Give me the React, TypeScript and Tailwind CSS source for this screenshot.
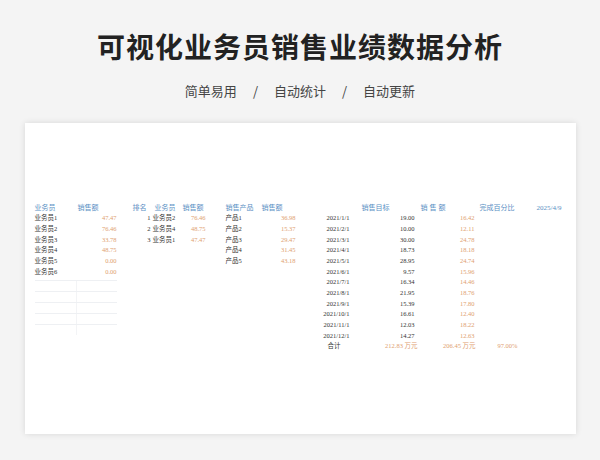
const F = { fontFamily: '"Liberation Serif","Noto Sans CJK SC",serif' }

const sales = [['业务员1', '47.47'], ['业务员2', '76.46'], ['业务员3', '33.78'], ['业务员4', '48.75'], ['业务员5', '0.00'], ['业务员6', '0.00']]
const rank = [['1', '业务员2', '76.46'], ['2', '业务员4', '48.75'], ['3', '业务员1', '47.47']]
const prod = [['产品1', '36.98'], ['产品2', '15.37'], ['产品3', '29.47'], ['产品4', '31.45'], ['产品5', '43.18']]
const monthly = [
  ['2021/1/1', '19.00', '16.42'], ['2021/2/1', '10.00', '12.11'], ['2021/3/1', '30.00', '24.78'],
  ['2021/4/1', '18.73', '18.18'], ['2021/5/1', '28.95', '24.74'], ['2021/6/1', '9.57', '15.96'],
  ['2021/7/1', '16.34', '14.46'], ['2021/8/1', '21.95', '18.76'], ['2021/9/1', '15.39', '17.80'],
  ['2021/10/1', '16.61', '12.40'], ['2021/11/1', '12.03', '18.22'], ['2021/12/1', '14.27', '12.63'],
]

const H = 'h-[10.7px] leading-[10.7px] text-[7px] text-[#5b8fc4]'
const R = 'h-[10.7px] leading-[10.7px] text-[6.5px] text-[#333]'
const V = 'text-[#e0a070]'

export default function App() {
  return (
    <div className="w-[600px] h-[460px] bg-[#f4f4f4] flex flex-col items-center" style={F}>
      <h1 className="mt-[25px] text-[28px] font-bold text-[#222] tracking-[1px]" style={{ fontFamily: '"Noto Sans CJK SC",sans-serif' }}>可视化业务员销售业绩数据分析</h1>
      <div className="mt-[14px] flex gap-[16px] text-[13px] text-[#444]" style={{ fontFamily: '"Noto Sans CJK SC",sans-serif' }}>
        <span>简单易用</span><span>/</span><span>自动统计</span><span>/</span><span>自动更新</span>
      </div>
      <div className="mt-[22px] w-[551px] h-[311px] bg-white shadow-[0_0_6px_rgba(0,0,0,0.12)] pt-[80px] pl-[10px] flex">
        <div className="w-[82px] flex flex-col">
          <div className={H + ' flex'}><span className="w-[43px]">业务员</span><span>销售额</span></div>
          {sales.map(r => (
            <div key={r[0]} className={R + ' flex justify-between'}><span>{r[0]}</span><span className={V}>{r[1]}</span></div>
          ))}
          <div className="mt-[3px] flex flex-col">
            {[0, 1, 2, 3, 4].map(i => (
              <div key={i} className="h-[11px] border-t border-[#eef0f3] flex"><div className="w-[42px] border-r border-[#f3f4f6]" /></div>
            ))}
          </div>
        </div>
        <div className="ml-[16px] w-[73px] flex flex-col">
          <div className={H + ' flex'}><span className="w-[22px]">排名</span><span className="w-[28px]">业务员</span><span>销售额</span></div>
          {rank.map(r => (
            <div key={r[0]} className={R + ' flex'}><span className="w-[20px] text-right pr-[2px]">{r[0]}</span><span className="w-[30px]">{r[1]}</span><span className={V + ' flex-1 text-right'}>{r[2]}</span></div>
          ))}
        </div>
        <div className="ml-[20px] w-[70px] flex flex-col">
          <div className={H + ' flex'}><span className="w-[36px]">销售产品</span><span>销售额</span></div>
          {prod.map(r => (
            <div key={r[0]} className={R + ' flex justify-between'}><span>{r[0]}</span><span className={V}>{r[1]}</span></div>
          ))}
        </div>
        <div className="ml-[15px] flex flex-col">
          <div className={H + ' flex'}><span className="w-[51px]" /><span className="w-[59px]">销售目标</span><span className="w-[59px] tracking-[2px]">销售额</span><span className="w-[57px]">完成百分比</span><span>2025/4/9</span></div>
          {monthly.map(r => (
            <div key={r[0]} className={R + ' flex'}><span className="w-[39px] text-right">{r[0]}</span><span className="w-[65px] text-right">{r[1]}</span><span className={V + ' w-[60px] text-right'}>{r[2]}</span></div>
          ))}
          <div className={R + ' flex ' + V}><span className="w-[30px] text-right text-[#333]">合计</span><span className="w-[77px] text-right">212.83 万元</span><span className="w-[58px] text-right">206.45 万元</span><span className="w-[42px] text-right">97.00%</span></div>
        </div>
      </div>
    </div>
  )
}
